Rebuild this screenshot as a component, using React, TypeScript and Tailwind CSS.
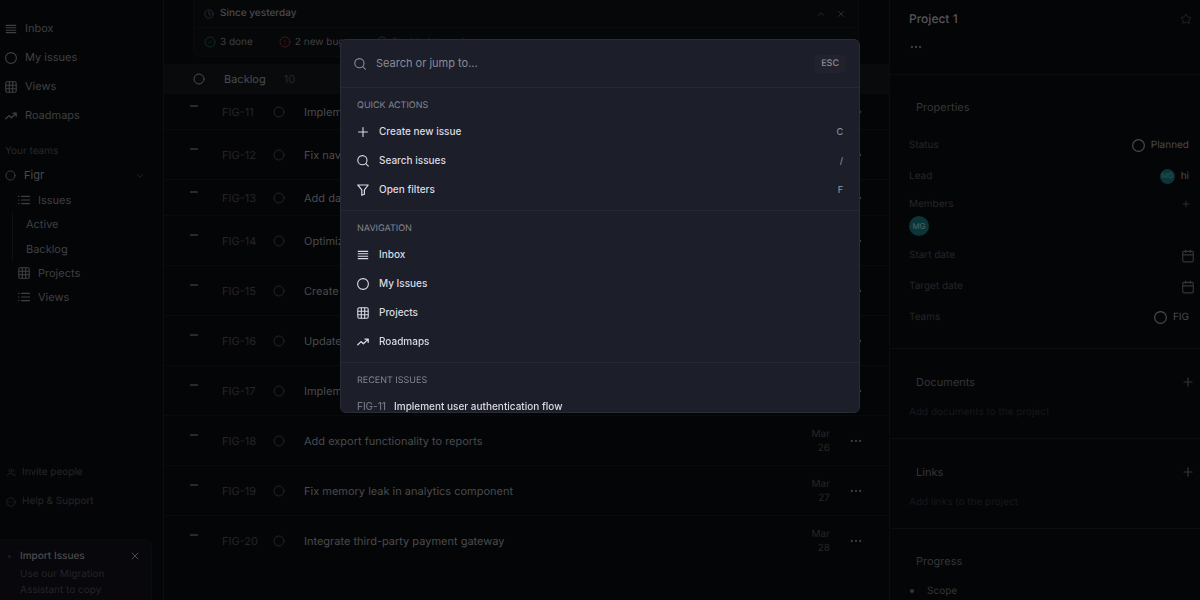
import type { ReactNode } from "react";
import {
  Calendar,
  ChevronDown,
  ChevronUp,
  Circle,
  CircleAlert,
  CircleCheck,
  CircleEllipsis,
  Clock,
  Ellipsis,
  Plus,
  Star,
  Users,
  X,
} from "lucide-react";

interface IconProps {
  className?: string;
}

function Svg({ className = "size-3", children }: IconProps & { children: ReactNode }) {
  return (
    <svg
      viewBox="0 0 12 12"
      className={`shrink-0 ${className}`}
      fill="none"
      stroke="currentColor"
      strokeWidth={1.1}
      strokeLinecap="round"
      strokeLinejoin="round"
    >
      {children}
    </svg>
  );
}

function LinesIcon(p: IconProps) {
  return (
    <Svg {...p}>
      <path d="M0.8 2.4h10.4M0.8 4.8h10.4M0.8 7.2h10.4M0.8 9.6h10.4" strokeLinecap="butt" />
    </Svg>
  );
}

function RingIcon(p: IconProps) {
  return (
    <Svg {...p}>
      <circle cx="6" cy="6" r="5.4" />
    </Svg>
  );
}

function GridIcon(p: IconProps) {
  return (
    <Svg {...p}>
      <rect x="0.8" y="0.8" width="10.4" height="10.4" rx="1.4" />
      <path d="M4.3 1v10M7.7 1v10M1 4.3h10M1 7.7h10" />
    </Svg>
  );
}

function TrendIcon(p: IconProps) {
  return (
    <Svg {...p}>
      <path d="M0.8 8.8 4 5.6l2.4 2.2L11 3.4M7.9 3.1h3.3v3.2" strokeWidth={1.3} />
    </Svg>
  );
}

function ListIcon(p: IconProps) {
  return (
    <Svg {...p}>
      <path d="M3.6 2.4h8M3.6 6h8M3.6 9.6h8M0.6 2.4h0.4M0.6 6h0.4M0.6 9.6h0.4" />
    </Svg>
  );
}

function FunnelIcon(p: IconProps) {
  return (
    <Svg {...p}>
      <path d="M0.8 1h10.4L7.4 5.8v4.4L4.8 11.3V5.8z" strokeWidth={1.2} />
    </Svg>
  );
}

function SearchIcon(p: IconProps) {
  return (
    <Svg {...p}>
      <circle cx="5.4" cy="5.2" r="4.6" />
      <path d="m8.8 8.6 2.5 2.5" />
    </Svg>
  );
}

function PlusIcon(p: IconProps) {
  return (
    <Svg {...p}>
      <path d="M6 1.6v8.8M1.6 6h8.8" />
    </Svg>
  );
}

const mainNav = [
  { label: "Inbox", icon: LinesIcon },
  { label: "My issues", icon: RingIcon },
  { label: "Views", icon: GridIcon },
  { label: "Roadmaps", icon: TrendIcon },
];

const issues = [
  { id: "FIG-11", title: "Implement user authentication flow" },
  { id: "FIG-12", title: "Fix navigation menu responsiveness", date: ["Mar", "20"] },
  { id: "FIG-13", title: "Add dark mode support" },
  { id: "FIG-14", title: "Optimize database queries", date: ["Mar", "22"] },
  { id: "FIG-15", title: "Create onboarding flow", date: ["Mar", "23"] },
  { id: "FIG-16", title: "Update API documentation", date: ["Mar", "24"] },
  { id: "FIG-17", title: "Implement search filters", date: ["Mar", "25"] },
  { id: "FIG-18", title: "Add export functionality to reports", date: ["Mar", "26"] },
  { id: "FIG-19", title: "Fix memory leak in analytics component", date: ["Mar", "27"] },
  { id: "FIG-20", title: "Integrate third-party payment gateway", date: ["Mar", "28"] },
];

const quickActions = [
  { label: "Create new issue", icon: PlusIcon, shortcut: "C" },
  { label: "Search issues", icon: SearchIcon, shortcut: "/" },
  { label: "Open filters", icon: FunnelIcon, shortcut: "F" },
];

const navigation = [
  { label: "Inbox", icon: LinesIcon },
  { label: "My Issues", icon: RingIcon },
  { label: "Projects", icon: GridIcon },
  { label: "Roadmaps", icon: TrendIcon },
];

function Sidebar() {
  return (
    <aside className="flex w-[164px] shrink-0 flex-col border-r border-[#0c0d0f] text-[#3f4043]">
      <nav className="mt-[14px] flex flex-col">
        {mainNav.map(({ label, icon: Icon }) => (
          <a key={label} href="#" className="flex h-[29px] items-center gap-2 pl-[5px]">
            <Icon className="size-3" />
            {label}
          </a>
        ))}
      </nav>

      <h2 className="mt-[13px] pl-[5px] text-[10px] leading-4 text-[#27282b]">Your teams</h2>
      <button className="mt-1 flex h-[25px] items-center pr-[18px] pl-[5px]">
        <Circle className="size-[11px]" />
        <span className="ml-2 text-[#4a4b4e]">Figr</span>
        <ChevronDown className="ml-auto size-[10px] text-[#2a2b2e]" />
      </button>
      <a href="#" className="flex h-6 items-center gap-2 pl-[18px]">
        <ListIcon className="size-3" />
        Issues
      </a>
      <div className="ml-3 flex flex-col border-l border-[#0f1012] pl-[13px]">
        <a href="#" className="flex h-[25px] items-center">Active</a>
        <a href="#" className="flex h-6 items-center">Backlog</a>
      </div>
      <a href="#" className="flex h-6 items-center gap-2 pl-[18px]">
        <GridIcon className="size-3" />
        Projects
      </a>
      <a href="#" className="flex h-6 items-center gap-2 pl-[18px]">
        <ListIcon className="size-3" />
        Views
      </a>

      <div className="mt-auto text-[10px] text-[#242528]">
        <a href="#" className="flex h-[29px] items-center gap-[6px] pl-[7px]">
          <Users className="size-[9px]" />
          Invite people
        </a>
        <a href="#" className="flex h-[29px] items-center gap-[6px] pl-[6px]">
          <CircleEllipsis className="size-[10px]" />
          Help &amp; Support
        </a>
        <section className="mt-[23px] mr-[11px] rounded-tr-md border-t border-r border-[#0b0a12] bg-[#07070c] pt-2 pb-[2px] pl-5 leading-4">
          <div className="relative flex items-center justify-between pr-[10px]">
            <span className="absolute -left-3 size-[3px] rounded-full bg-[#1d1d26]" />
            <h3 className="font-medium text-[#4c4c50]">Import Issues</h3>
            <button aria-label="Dismiss" className="text-[#4c4c50]">
              <X className="size-3" />
            </button>
          </div>
          <p className="mt-[2px]">
            Use our Migration
            <br />
            Assistant to copy
          </p>
        </section>
      </div>
    </aside>
  );
}

function IssueRow({ id, title, date }: { id: string; title: string; date?: string[] }) {
  return (
    <li className="flex items-center border-b border-[#090a0c] pt-[11px] pr-[26px] pb-[10px] pl-[26px] leading-[14px] last:border-0">
      {/* no-priority dash sits on the top edge of the line */}
      <svg viewBox="0 0 8 14" className="mr-6 h-[14px] w-2 shrink-0">
        <rect y="0.2" width="8" height="1.6" rx="0.6" fill="#36373a" />
      </svg>
      <span className="w-[51px] text-[#242528]">{id}</span>
      <Circle className="mr-[19px] size-3 shrink-0 text-[#242528]" />
      <a href="#" className="text-[#4a4b4e]">{title}</a>
      <span className="ml-auto text-right text-[10px] text-[#242528]">
        {date?.map((part) => (
          <span key={part} className="block">{part}</span>
        ))}
      </span>
      <button aria-label={`${id} menu`} className="ml-[19px] text-[#3a3b3e]">
        <Ellipsis className="size-[14px]" />
      </button>
    </li>
  );
}

function IssueList() {
  return (
    <main className="min-w-0 flex-1">
      <section className="mr-[30px] ml-[29px] rounded-b-md border border-t-0 border-[#0b0b0d] bg-[#060709] text-[10px]">
        <header className="flex h-7 items-center border-b border-[#0b0b0d] px-[10px] text-[#4a4b4e]">
          <Clock className="size-[10px] text-[#2f3033]" />
          <h2 className="ml-[6px] font-medium">Since yesterday</h2>
          <button aria-label="Collapse" className="ml-auto text-[#333437]">
            <ChevronUp className="size-[10px]" />
          </button>
          <button aria-label="Close" className="mr-[2px] ml-[10px] text-[#333437]">
            <X className="size-[10px]" />
          </button>
        </header>
        <ul className="flex h-7 items-center gap-[26px] px-[10px] text-[#3f4043]">
          <li className="flex items-center gap-1">
            <CircleCheck className="size-3 text-[#0b2f22]" />
            3 done
          </li>
          <li className="flex items-center gap-1">
            <CircleAlert className="size-3 text-[#431519]" />
            2 new bugs
          </li>
          <li className="flex items-center gap-1 text-[#242528]">
            <Circle className="size-3" />
            5 added to cycle
          </li>
        </ul>
      </section>

      <header className="mt-[7px] flex h-[30px] items-center bg-[#090a0c] pl-[29px] text-[#4a4b4e]">
        <Circle className="size-3" />
        <h2 className="ml-[19px]">Backlog</h2>
        <span className="ml-[18px] text-[#27282b]">10</span>
      </header>
      <ul>
        {issues.map((issue) => (
          <IssueRow key={issue.id} {...issue} />
        ))}
      </ul>
    </main>
  );
}

function Property({ label, children }: { label: string; children: ReactNode }) {
  return (
    <div className="flex h-[31px] items-center justify-between text-[#242528]">
      <dt>{label}</dt>
      <dd className="flex items-center gap-[6px] text-[#4a4b4e]">{children}</dd>
    </div>
  );
}

function PanelSection({ title, hint }: { title: string; hint: string }) {
  return (
    <section className="h-[90px] border-b border-[#0c0d0f] pt-[25px] pr-[5px] pl-[19px]">
      <div className="flex items-center justify-between pl-[7px] leading-4">
        <h3 className="text-[#343538]">{title}</h3>
        <button aria-label={`Add ${title}`} className="text-[#343538]">
          <Plus className="size-[14px]" />
        </button>
      </div>
      <p className="mt-[14px] text-[10px] leading-4 text-[#17181b]">{hint}</p>
    </section>
  );
}

function ProjectPanel() {
  return (
    <aside className="w-[311px] shrink-0 border-l border-[#0c0d0f]">
      <header className="h-[75px] border-b border-[#0c0d0f] pt-[10px] pr-2 pl-[19px]">
        <div className="flex items-center justify-between">
          <h1 className="text-xs leading-[18px] font-medium text-[#55565a]">Project 1</h1>
          <button aria-label="Favorite" className="text-[#222326]">
            <Star className="size-3" />
          </button>
        </div>
        <button aria-label="More" className="mt-3 block text-[#3f4043]">
          <Ellipsis className="size-[14px]" />
        </button>
      </header>

      <section className="border-b border-[#0c0d0f] pr-[11px] pb-[15px] pl-[19px]">
        <h3 className="pt-6 pb-[15px] pl-[7px] leading-4 text-[#343538]">Properties</h3>
        <dl className="text-[10px]">
          <Property label="Status">
            <RingIcon className="size-[13px]" />
            Planned
          </Property>
          <Property label="Lead">
            <span className="flex size-[15px] items-center justify-center rounded-full bg-[#0b3538] text-[7px] text-[#3a5355]">
              MG
            </span>
            hi
          </Property>
          <div className="text-[#242528]">
            <dt className="flex h-6 items-center justify-between">
              Members
              <button aria-label="Add member" className="-mr-[2px] text-[#343538]">
                <Plus className="size-[10px]" />
              </button>
            </dt>
            <dd className="mb-1 flex size-5 items-center justify-center rounded-full bg-[#0b3538] text-[8px] text-[#4c6466]">
              MG
            </dd>
          </div>
          <Property label="Start date">
            <Calendar className="-mr-[6px] size-[14px] text-[#343538]" />
          </Property>
          <Property label="Target date">
            <Calendar className="-mr-[6px] size-[14px] text-[#343538]" />
          </Property>
          <Property label="Teams">
            <RingIcon className="size-[13px]" />
            FIG
          </Property>
        </dl>
      </section>

      <PanelSection title="Documents" hint="Add documents to the project" />
      <PanelSection title="Links" hint="Add links to the project" />

      <section className="pt-6 pr-[5px] pl-[19px]">
        <h3 className="pl-[7px] leading-4 text-[#343538]">Progress</h3>
        <p className="mt-[14px] flex items-center text-[10px] leading-4 text-[#343538]">
          <span className="mr-[13px] ml-[1px] size-1 rounded-full bg-[#343538]" />
          Scope
        </p>
      </section>
    </aside>
  );
}

function CommandGroup({ title, children }: { title: string; children: ReactNode }) {
  return (
    <section className="border-b border-[#272834] px-4 pt-[10px] pb-[6px] text-[10px] font-medium">
      <h3 className="mb-[3px] text-[9px] leading-4 font-normal text-[#85868f] uppercase">{title}</h3>
      {children}
    </section>
  );
}

function CommandPalette() {
  return (
    <div className="fixed inset-0 flex items-start justify-center pt-[39px]">
      <div
        role="dialog"
        aria-label="Command menu"
        className="max-h-[374px] w-[520px] overflow-hidden rounded-md border border-[#2a2b37] bg-[#1c1e2a] text-[#d9dae2]"
      >
        <div className="flex h-12 items-center border-b border-[#272834] px-[13px]">
          <SearchIcon className="size-3 text-[#8b8c95]" />
          <input
            type="text"
            aria-label="Search"
            placeholder="Search or jump to..."
            className="ml-[10px] min-w-0 flex-1 bg-transparent outline-none placeholder:text-[#8b8c95]"
          />
          <kbd className="rounded-sm bg-[#21222e] px-[7px] font-[Inter] text-[9px] leading-[18px] font-medium text-[#8b8c95]">
            ESC
          </kbd>
        </div>

        <CommandGroup title="Quick actions">
          {quickActions.map(({ label, icon: Icon, shortcut }) => (
            <button key={label} className="flex h-[29px] w-full items-center gap-[10px]">
              <Icon className="size-3" />
              {label}
              <kbd className="ml-auto font-[Inter] text-[9px] text-[#8b8c95]">{shortcut}</kbd>
            </button>
          ))}
        </CommandGroup>

        <CommandGroup title="Navigation">
          {navigation.map(({ label, icon: Icon }) => (
            <button key={label} className="flex h-[29px] w-full items-center gap-[10px]">
              <Icon className="size-3" />
              {label}
            </button>
          ))}
        </CommandGroup>

        <CommandGroup title="Recent issues">
          <button className="flex h-[29px] w-full items-center gap-2">
            <span className="text-[#74757f]">FIG-11</span>
            Implement user authentication flow
          </button>
        </CommandGroup>
      </div>
    </div>
  );
}

export default function App() {
  return (
    <div className="flex h-screen overflow-hidden bg-[#040507] font-[Inter,sans-serif] text-[11px] [text-rendering:geometricPrecision]">
      <Sidebar />
      <IssueList />
      <ProjectPanel />
      <CommandPalette />
    </div>
  );
}
